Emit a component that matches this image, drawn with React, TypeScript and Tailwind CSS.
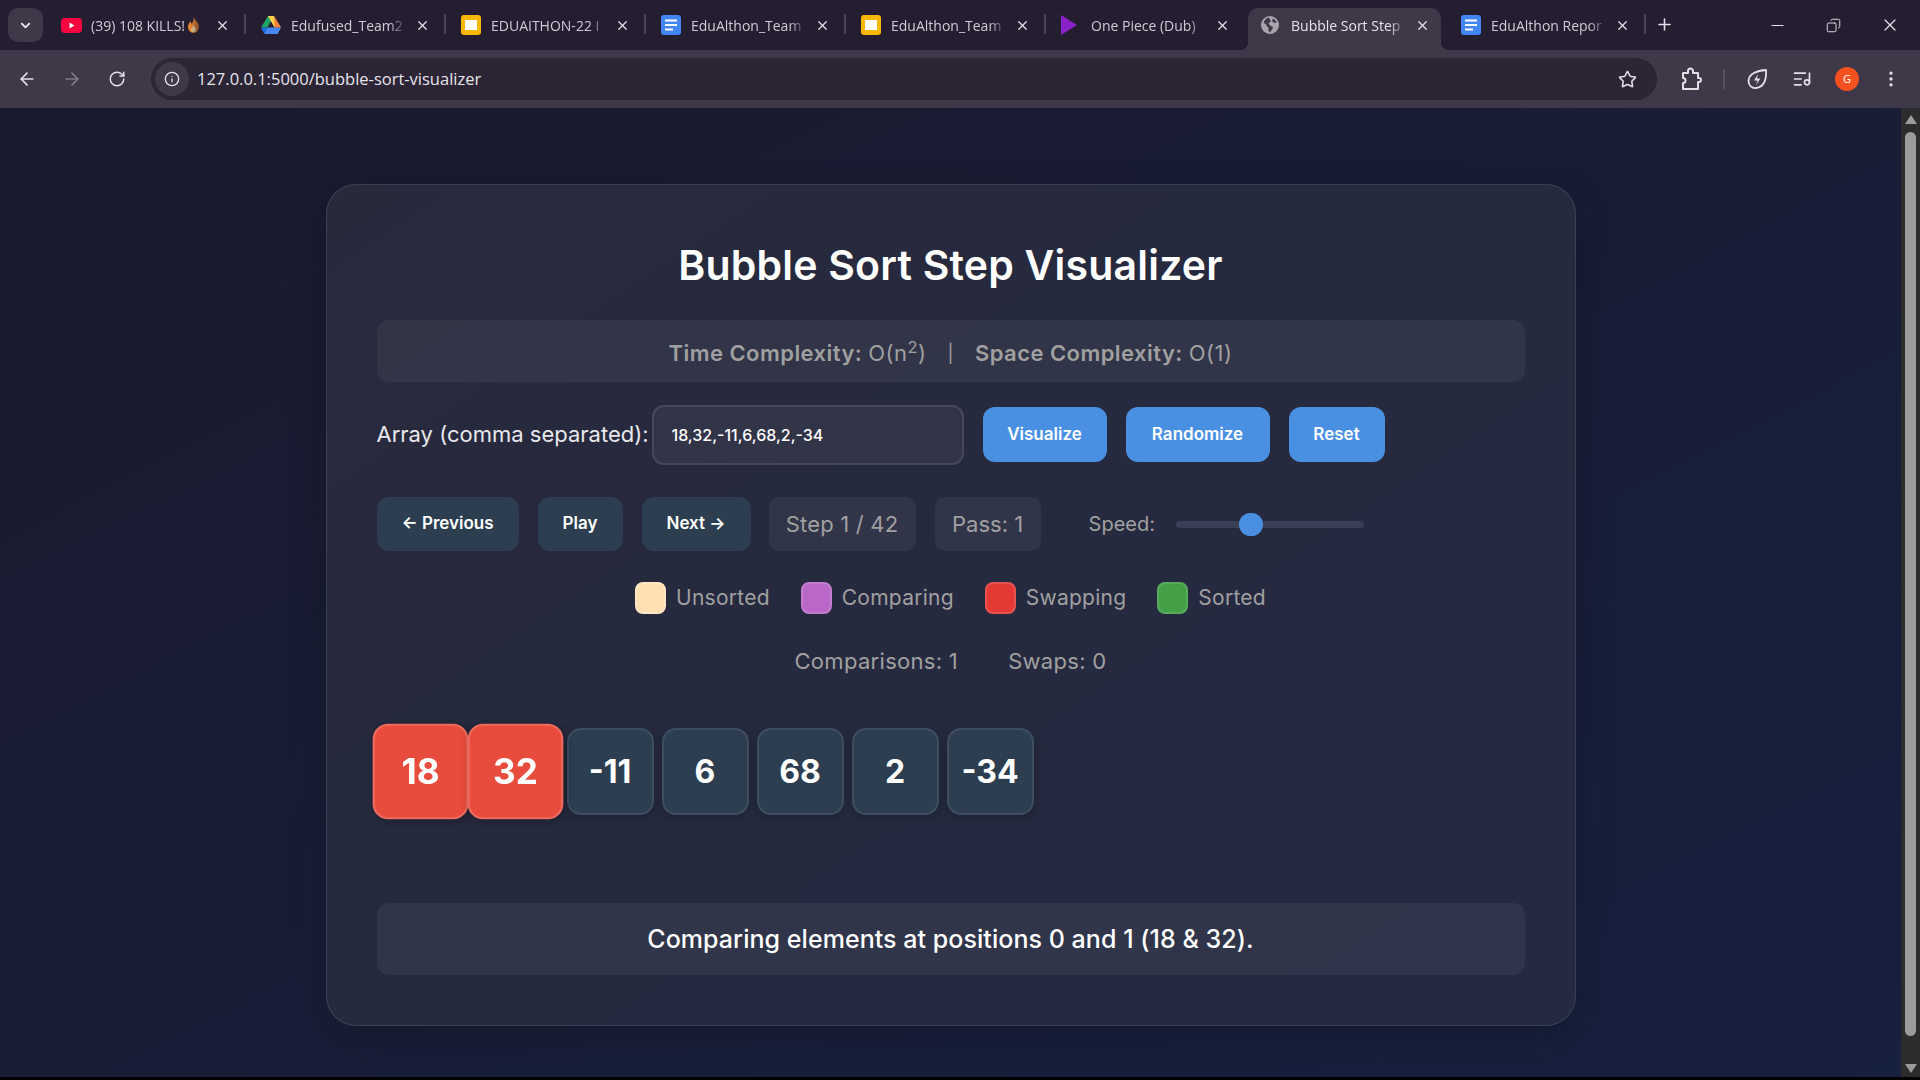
import {
  ArrowLeft,
  ArrowRight,
  ChevronDown,
  Copy,
  EllipsisVertical,
  Info,
  ListMusic,
  Minus,
  Plus,
  RotateCw,
  Star,
  X,
} from "lucide-react";
import type { ReactNode } from "react";

const YoutubeIcon = () => (
  <svg width="21" height="15" viewBox="0 0 21 15">
    <rect width="21" height="15" rx="4" fill="#f5053f" />
    <path d="M8.5 4.5v6l5-3z" fill="#fff" />
  </svg>
);

const DriveIcon = () => (
  <svg width="20" height="18" viewBox="0 0 20 18">
    <path d="M7 0h6l-6.6 11.5H0z" fill="#1fa463" />
    <path d="M13 0l7 11.5h-6.5L7 0z" fill="#ffd04b" />
    <path d="M3.3 18L6.4 11.5H20L16.7 18z" fill="#4687f4" />
    <path d="M0 11.5h6.4L3.3 18z" fill="#1a73e8" />
    <path d="M13 0h0l7 11.5h-6.4z" fill="#ea4335" opacity="0.55" />
  </svg>
);

const SlidesIcon = () => (
  <svg width="20" height="20" viewBox="0 0 20 20">
    <rect width="20" height="20" rx="3" fill="#f9b707" />
    <rect x="4" y="5" width="12" height="10" fill="#fff" />
  </svg>
);

const DocsIcon = () => (
  <svg width="20" height="20" viewBox="0 0 20 20">
    <rect width="20" height="20" rx="3" fill="#4285f4" />
    <rect x="4" y="4.5" width="12" height="2" fill="#fff" />
    <rect x="4" y="9" width="12" height="2" fill="#fff" />
    <rect x="4" y="13.5" width="8" height="2" fill="#fff" />
  </svg>
);

const PlayIcon = () => (
  <svg width="16" height="20" viewBox="0 0 16 20">
    <path d="M0 0l16 10L0 20z" fill="#8a22c9" />
  </svg>
);

const GlobeIcon = () => (
  <svg width="18" height="18" viewBox="0 0 18 18">
    <circle cx="9" cy="9" r="9" fill="#a9a5ae" />
    <path d="M8 1.500c-3 .5-5 3-5.500 5.500 2 .5 3 1.500 3.500 3.500l1.500 1V15l2 1.500c0-2 2.500-3.500 2.500-5.500L9 9.500 7.500 7 10 5.500z" fill="#3f3849" />
    <path d="M12 2.500l-1 2.500 2 2 2.500-.5c-.5-1.800-2-3.300-3.500-4z" fill="#3f3849" />
  </svg>
);

const PuzzleIcon = () => (
  <svg width="22" height="24" viewBox="0 0 22 24" fill="none" stroke="#e3dfe7" strokeWidth="2" strokeLinejoin="round">
    <path d="M3 6h5V4a2.500 2.500 0 0 1 5 0v2h5v5h1a2 2 0 0 1 0 4h-1v7H3v-6a2.500 2.500 0 0 0 0-5z" />
  </svg>
);

const BoltIcon = () => (
  <svg width="22" height="22" viewBox="0 0 22 22" fill="none" stroke="#e3dfe7" strokeWidth="1.800" strokeLinejoin="round">
    <path d="M20 2c.5 9-2 17-10 18-4 .5-7.500-2.500-7.500-7C2.500 6 11 2.500 20 2z" />
    <path d="M12 6l-4 6.500h3.500L10 17l4.500-6.500H11z" fill="#e3dfe7" stroke="none" />
  </svg>
);

const Flame = () => (
  <svg width="13" height="16" viewBox="0 0 13 16" className="shrink-0">
    <path d="M6.500 0c1 3 5.500 5 5.500 10a5.500 6 0 0 1-11 0c0-2.500 1.500-3.500 2-5.500 1 .5 1.500 1.500 1.500 2.500C6 5 7 3 6.500 0z" fill="#f28a2e" />
    <path d="M6.500 8c.5 1.500 2.500 2.500 2.500 4.500a2.500 2.500 0 0 1-5 0C4 11 6 10 6.500 8z" fill="#fcd9a0" />
  </svg>
);

interface TabProps {
  icon: ReactNode;
  title: string;
  active?: boolean;
  extra?: ReactNode;
  divider?: boolean;
}

function Tab({ icon, title, active, extra, divider = true }: TabProps) {
  return (
    <div
      className={`relative flex h-[42px] w-[193px] shrink-0 items-center pb-[8px] pl-[13px] pr-[11px] ${
        active ? "rounded-t-[10px] bg-[#3f3849] text-[#e6e1ea]" : "text-[#cfcad5]"
      }`}
    >
      <div className="flex w-[26px] shrink-0 items-center">{icon}</div>
      <div className="flex min-w-0 flex-1 items-center gap-[2px] overflow-hidden whitespace-nowrap pl-[4px] [mask-image:linear-gradient(to_right,black_85%,transparent)] font-['Open_Sans',sans-serif] text-[14px]">
        <span>{title}</span>
        {extra}
      </div>
      <X size={15} strokeWidth={2} className="ml-[8px] shrink-0 text-[#e4e0e8]" />
      {divider && <div className="absolute right-[-5px] top-[6px] h-[20px] w-[2px] bg-[#4a4453]" />}
      {active && (
        <>
          <div className="absolute bottom-0 left-[-8px] h-[8px] w-[8px] bg-[radial-gradient(circle_at_0_0,transparent_8px,#3f3849_8px)]" />
          <div className="absolute bottom-0 right-[-8px] h-[8px] w-[8px] bg-[radial-gradient(circle_at_100%_0,transparent_8px,#3f3849_8px)]" />
        </>
      )}
    </div>
  );
}

function NavButton({ children }: { children: ReactNode }) {
  return (
    <button className="flex h-[54px] items-center justify-center rounded-[12px] bg-[#2c3e50] px-[25px] text-[17px] font-semibold text-white">
      {children}
    </button>
  );
}

function BlueButton({ children, width }: { children: ReactNode; width: string }) {
  return (
    <button className={`flex h-[55px] items-center justify-center rounded-[12px] bg-[#4a90e2] pt-[2px] text-[17px] font-semibold text-white ${width}`}>
      {children}
    </button>
  );
}

function LegendItem({ color, border, label }: { color: string; border: string; label: string }) {
  return (
    <div className="flex items-center gap-[10px]">
      <div className={`h-[32px] w-[31px] rounded-[8px] border-2 ${color} ${border}`} />
      <span>{label}</span>
    </div>
  );
}

function Bar({ value, active }: { value: number; active?: boolean }) {
  return (
    <div
      className={`flex h-[87px] w-[87px] items-center justify-center rounded-[14px] border-2 text-[32px] font-bold text-white shadow-[0_4px_12px_rgba(0,0,0,0.2)] ${
        active
          ? "scale-110 border-[#ee6a5c] bg-[#e74c3c] shadow-[2px_2px_8px_rgba(0,0,0,0.25)]"
          : "border-[#3d4e61] bg-[#2c3e50]"
      }`}
    >
      {value}
    </div>
  );
}

export default function App() {
  return (
    <div className="flex h-screen w-full flex-col overflow-hidden bg-black font-['Inter',sans-serif]">
      {/* browser chrome */}
      <div className="flex h-[50px] shrink-0 items-end bg-[#251e30]">
        <div className="mb-[8px] ml-[8px] flex h-[34px] w-[35px] items-center justify-center rounded-[10px] bg-[#3f3849]">
          <ChevronDown size={15} strokeWidth={3} className="text-[#e8e4ec]" />
        </div>
        <div className="ml-[5px] flex gap-[7px]">
          <Tab icon={<YoutubeIcon />} title="(39) 108 KILLS!" extra={<Flame />} />
          <Tab icon={<DriveIcon />} title="Edufused_Team2" />
          <Tab icon={<SlidesIcon />} title="EDUAITHON-22 I" />
          <Tab icon={<DocsIcon />} title="EduAlthon_Team" />
          <Tab icon={<SlidesIcon />} title="EduAlthon_Team" />
          <Tab icon={<PlayIcon />} title="One Piece (Dub)" divider={false} />
          <Tab icon={<GlobeIcon />} title="Bubble Sort Step" active divider={false} />
          <Tab icon={<DocsIcon />} title="EduAlthon Repor" />
        </div>
        <Plus size={19} strokeWidth={2} className="mb-[16px] ml-[14px] text-[#e4e0e8]" />
        <div className="mb-[15px] ml-auto flex items-center gap-[39px] pr-[20px] text-[#e4e0e8]">
          <Minus size={19} strokeWidth={1.5} />
          <Copy size={15} strokeWidth={1.5} className="-scale-x-100" />
          <X size={20} strokeWidth={1.5} />
        </div>
      </div>
      <div className="flex h-[58px] shrink-0 items-center bg-[#3f3849] pl-[17px] text-[#e3dfe7]">
        <ArrowLeft size={20} strokeWidth={2} />
        <ArrowRight size={20} strokeWidth={2} className="ml-[25px] text-[#7f7a86]" />
        <RotateCw size={18} strokeWidth={2} className="ml-[26px]" />
        <div className="ml-[25px] flex h-[42px] w-[1506px] items-center rounded-full bg-[#2c2535] pl-[4px] pr-[20px]">
          <div className="flex h-[34px] w-[34px] items-center justify-center rounded-full bg-[#3f3849]">
            <Info size={16} strokeWidth={2} />
          </div>
          <span className="ml-[8px] pt-[1px] font-['Open_Sans',sans-serif] text-[16.500px] text-[#e8e4ec]">
            127.0.0.1:5000/bubble-sort-visualizer
          </span>
          <Star size={19} strokeWidth={2} className="ml-auto" />
        </div>
        <div className="ml-[23px]">
          <PuzzleIcon />
        </div>
        <div className="ml-[21px] h-[20px] w-[2px] bg-[#57505f]" />
        <div className="ml-[21px]">
          <BoltIcon />
        </div>
        <ListMusic size={20} strokeWidth={2} className="ml-[24px]" />
        <div className="ml-[23px] flex h-[24px] w-[24px] items-center justify-center rounded-full bg-[#f4511e] font-['Open_Sans',sans-serif] text-[11px] text-white">
          G
        </div>
        <EllipsisVertical size={20} strokeWidth={2} className="ml-[22px]" />
      </div>

      {/* page */}
      <div className="flex h-[969px] shrink-0">
        <div className="min-w-0 flex-1 bg-gradient-to-br from-[#1a1a2e] to-[#16213e] pt-[76px]">
          <div className="mx-auto flex h-[842px] w-[1250px] flex-col rounded-[30px] border border-white/10 bg-gradient-to-br from-[#282a3c] to-[#242a42] px-[50px] pt-[50px] shadow-[0_10px_40px_rgba(0,0,0,0.2)]">
            <h1 className="text-center text-[41px] font-semibold leading-[60px] tracking-[0.2px] text-white">
              Bubble Sort Step Visualizer
            </h1>
            <div className="mt-[25px] flex h-[62px] items-center justify-center rounded-[12px] bg-white/5 pt-[5px] text-[22px] tracking-[0.45px] text-[#a0a0a0]">
              <span className="font-semibold">Time Complexity:</span>
              <span className="ml-[6px]">
                O(n<sup>2</sup>)
              </span>
              <span className="mx-[21px] text-[18px]">|</span>
              <span className="font-semibold">Space Complexity:</span>
              <span className="ml-[6px]">O(1)</span>
            </div>

            <div className="mt-[23px] flex items-center">
              <label className="mb-[2px] w-[275px] shrink-0 whitespace-nowrap text-[22px] text-[#e8e8ec]">
                Array (comma separated):
              </label>
              <input
                readOnly
                value="18,32,-11,6,68,2,-34"
                className="h-[60px] w-[312px] rounded-[12px] border-2 border-white/10 bg-white/5 px-[18px] text-[16px] font-medium text-white outline-none"
              />
              <div className="mb-[2px] ml-[19px] flex gap-[19px]">
                <BlueButton width="w-[124px]">Visualize</BlueButton>
                <BlueButton width="w-[144px]">Randomize</BlueButton>
                <BlueButton width="w-[96px]">Reset</BlueButton>
              </div>
            </div>

            <div className="mt-[32px] flex items-center">
              <div className="flex gap-[19px]">
                <NavButton>←&nbsp;Previous</NavButton>
                <NavButton>Play</NavButton>
                <NavButton>Next&nbsp;→</NavButton>
              </div>
              <div className="ml-[18px] flex h-[54px] w-[147px] items-center justify-center rounded-[10px] bg-white/5 text-[22px] tracking-[0.2px] text-[#a0a0a0]">
                Step 1 / 42
              </div>
              <div className="ml-[19px] flex h-[54px] w-[106px] items-center justify-center rounded-[10px] bg-white/5 text-[22px] text-[#a0a0a0]">
                Pass: 1
              </div>
              <span className="ml-[48px] w-[87px] text-[20px] text-[#a0a0a0]">Speed:</span>
              <div className="relative h-[7px] w-[188px] rounded-full bg-[#3b3f55]">
                <div className="absolute left-[63px] top-[-8px] h-[23px] w-[24px] rounded-full bg-[#4a90e2]" />
              </div>
            </div>

            <div className="mt-[31px] flex items-center justify-center gap-[31px] text-[21px] tracking-[0.25px] text-[#a0a0a0]">
              <LegendItem color="bg-[#ffe0b2]" border="border-[#ffe6c4]" label="Unsorted" />
              <LegendItem color="bg-[#ba68c8]" border="border-[#c27ccf]" label="Comparing" />
              <LegendItem color="bg-[#e53935]" border="border-[#e9534f]" label="Swapping" />
              <LegendItem color="bg-[#43a047]" border="border-[#58ab5c]" label="Sorted" />
            </div>

            <div className="mt-[31px] flex items-center justify-center gap-[50px] text-[22px] tracking-[0.3px] text-[#a0a0a0]">
              <span>Comparisons: 1</span>
              <span>Swaps: 0</span>
            </div>

            <div className="mt-[50px] flex gap-[8px]">
              <Bar value={18} active />
              <Bar value={32} active />
              <Bar value={-11} />
              <Bar value={6} />
              <Bar value={68} />
              <Bar value={2} />
              <Bar value={-34} />
            </div>

            <div className="mt-[88px] flex h-[72px] items-center justify-center rounded-[12px] bg-white/5 pt-[2px] text-[25px] font-medium tracking-[0.05px] text-white">
              Comparing elements at positions 0 and 1 (18 &amp; 32).
            </div>
          </div>
        </div>

        {/* scrollbar */}
        <div className="flex w-[19px] shrink-0 flex-col items-center bg-[#2c2c2c] pt-[7px]">
          <div className="h-0 w-0 border-x-[6px] border-b-[9px] border-x-transparent border-b-[#9b9b9b]" />
          <div className="mt-[8px] h-[904px] w-[11px] rounded-full bg-[#9b9b9b]" />
          <div className="mt-[28px] h-0 w-0 border-x-[6px] border-t-[9px] border-x-transparent border-t-[#9b9b9b]" />
        </div>
      </div>
    </div>
  );
}
